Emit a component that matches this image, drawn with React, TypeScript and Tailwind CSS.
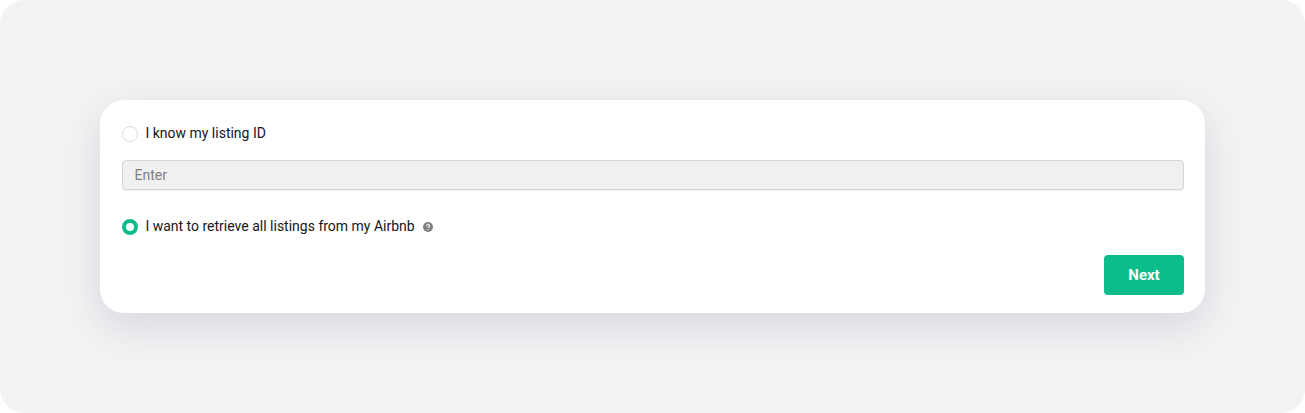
import { useState } from "react";

type RadioOptionProps = {
  label: string;
  checked: boolean;
  onSelect: () => void;
};

const RadioOption = ({ label, checked, onSelect }: RadioOptionProps) => {
  return (
    <label className="flex h-5 items-center gap-[7.4px] text-sm leading-5 text-[#161620]">
      <input
        type="radio"
        name="listing-source"
        checked={checked}
        onChange={onSelect}
        className="mt-0.5 size-4 shrink-0 appearance-none rounded-full border border-[#dcdce0] bg-white checked:border-4 checked:border-[#0bbd8a]"
      />
      <span>{label}</span>
    </label>
  );
};

const HelpIcon = () => {
  return (
    <svg viewBox="0 0 10 10" className="mt-0.5 size-2.5" aria-hidden="true">
      <circle cx="5" cy="5" r="5" fill="#808080" />
      <path
        d="M3.5 3.9a1.5 1.4 0 1 1 2.2 1.2c-.5.3-.7.5-.7 1"
        fill="none"
        stroke="#efefef"
        strokeWidth="1.2"
      />
      <circle cx="5" cy="7.6" r=".7" fill="#efefef" />
    </svg>
  );
};

const App = () => {
  const [source, setSource] = useState<"id" | "airbnb">("airbnb");

  return (
    <main className="h-[413px] w-full rounded-3xl bg-[#f3f3f3] p-[100px] font-[Roboto,sans-serif]">
      <section className="flex h-[213px] flex-col rounded-3xl bg-white pt-[23px] pr-[21px] pb-[18px] pl-[22px] shadow-[0_14px_40px_rgba(40,60,105,0.15)]">
        <RadioOption
          label="I know my listing ID"
          checked={source === "id"}
          onSelect={() => setSource("id")}
        />
        <input
          type="text"
          placeholder="Enter"
          disabled={source !== "id"}
          className="mt-[17px] h-[30px] w-full shrink-0 rounded border border-[#d5d5d5] bg-[#f0f0f0] px-[11.5px] text-sm shadow-[0_1px_1px_rgba(0,0,0,0.06)] placeholder:text-[#808080]"
        />
        <div className="mt-[26px] flex items-center gap-2">
          <RadioOption
            label="I want to retrieve all listings from my Airbnb"
            checked={source === "airbnb"}
            onSelect={() => setSource("airbnb")}
          />
          <HelpIcon />
        </div>
        <button
          type="button"
          className="mt-auto h-10 w-20 self-end rounded bg-[#0bbd8a] text-[15px] font-bold text-white"
        >
          Next
        </button>
      </section>
    </main>
  );
};

export default App;
